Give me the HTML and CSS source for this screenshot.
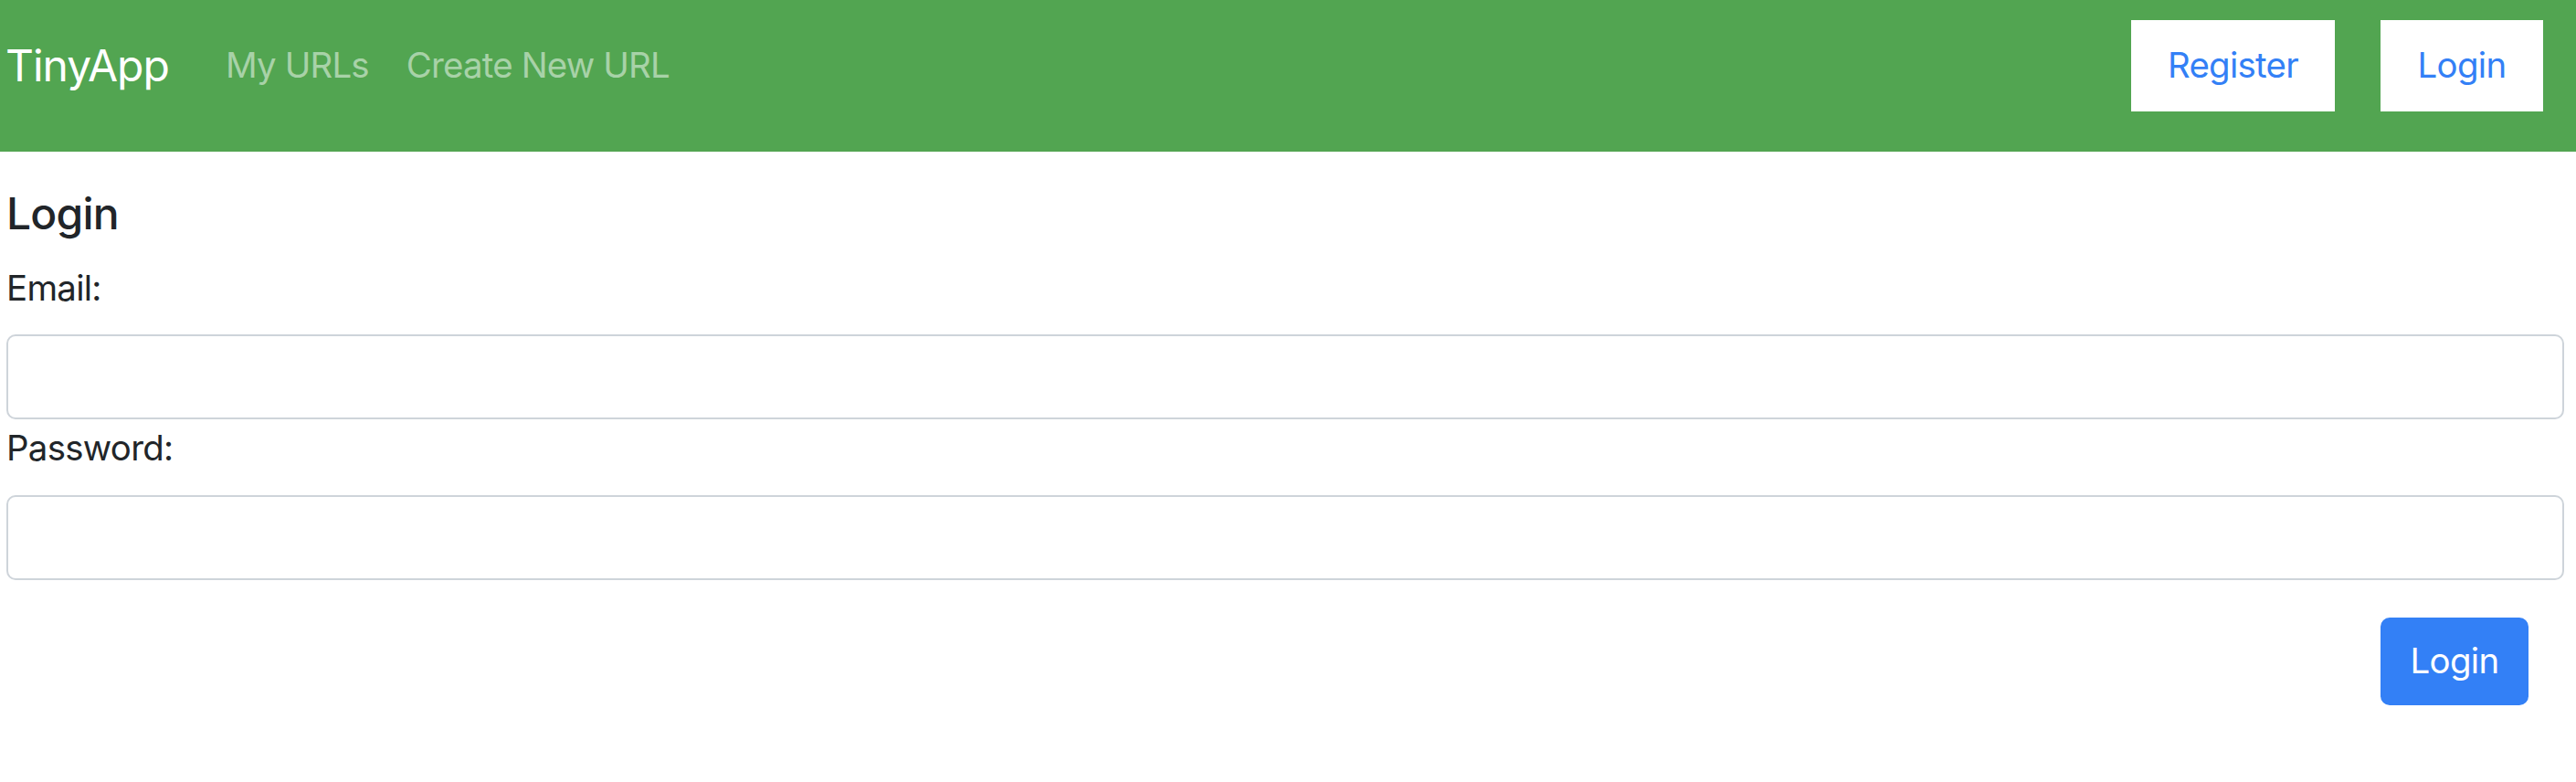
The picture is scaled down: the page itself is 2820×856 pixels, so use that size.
FILE: index.html
```html
<!DOCTYPE html>
<html lang="en">
<head>
<meta charset="utf-8">
<title>TinyApp - Login</title>
<link rel="stylesheet" href="styles.css">
</head>
<body>
<nav class="navbar">
  <a class="brand" href="#">TinyApp</a>
  <div class="nav-links">
    <a class="nav-link" href="#">My URLs</a>
    <a class="nav-link" href="#">Create New URL</a>
  </div>
  <div class="nav-actions">
    <a class="nav-btn" href="#">Register</a>
    <a class="nav-btn" href="#">Login</a>
  </div>
</nav>
<main class="content">
  <h1 class="title">Login</h1>
  <form class="form">
    <label class="label" for="email">Email:</label>
    <input class="input" id="email" type="email">
    <label class="label" for="password">Password:</label>
    <input class="input" id="password" type="password">
    <div class="actions">
      <button class="btn-primary" type="submit">Login</button>
    </div>
  </form>
</main>
</body>
</html>
```

FILE: styles.css
```css
* { box-sizing: border-box; }
html, body { margin: 0; padding: 0; }
body {
  font-family: Inter, "Noto Sans", "Liberation Sans", sans-serif;
  color: #212529;
  background: #fff;
  letter-spacing: -0.7px;
}
a { text-decoration: none; }

.navbar {
  display: flex;
  align-items: center;
  height: 166px;
  padding: 22px 36px 44px 6px;
  background: #52a551;
}
.brand {
  font-size: 48px;
  line-height: 57.6px;
  color: #fff;
  letter-spacing: -1px;
  margin-right: 62px;
}
.nav-links {
  display: flex;
  gap: 41px;
  flex: 1;
}
.nav-link {
  font-size: 38.4px;
  line-height: 57.6px;
  color: rgba(255, 255, 255, 0.5);
  letter-spacing: -0.8px;
}
.nav-actions {
  display: flex;
  gap: 50px;
}
.nav-btn {
  display: flex;
  align-items: center;
  justify-content: center;
  height: 100px;
  padding: 0 40px;
  min-width: 178px;
  background: #fff;
  color: #3380f6;
  font-size: 38.4px;
  line-height: 57.6px;
}

.content {
  padding: 39px 13px 40px 7px;
}
.title {
  margin: 0 0 21px;
  font-size: 48px;
  font-weight: 500;
  line-height: 57.6px;
  letter-spacing: -0.8px;
}
.form {
  display: flex;
  flex-direction: column;
}
.label {
  font-size: 38.4px;
  line-height: 57.6px;
  padding-top: 3px;
  margin-bottom: 22px;
}
.input {
  height: 93px;
  width: 100%;
  border: 2px solid #ced4da;
  border-radius: 10px;
  font-size: 38.4px;
  padding: 0 28px;
  font-family: inherit;
  background: #fff;
}
.actions {
  display: flex;
  justify-content: flex-end;
  padding-right: 39px;
  margin-top: 41px;
}
.btn-primary {
  height: 96px;
  width: 162px;
  padding: 0;
  border: none;
  border-radius: 10px;
  background: #3380f6;
  color: #fff;
  font-family: inherit;
  font-size: 38.4px;
  line-height: 57.6px;
  letter-spacing: -0.7px;
}
```
